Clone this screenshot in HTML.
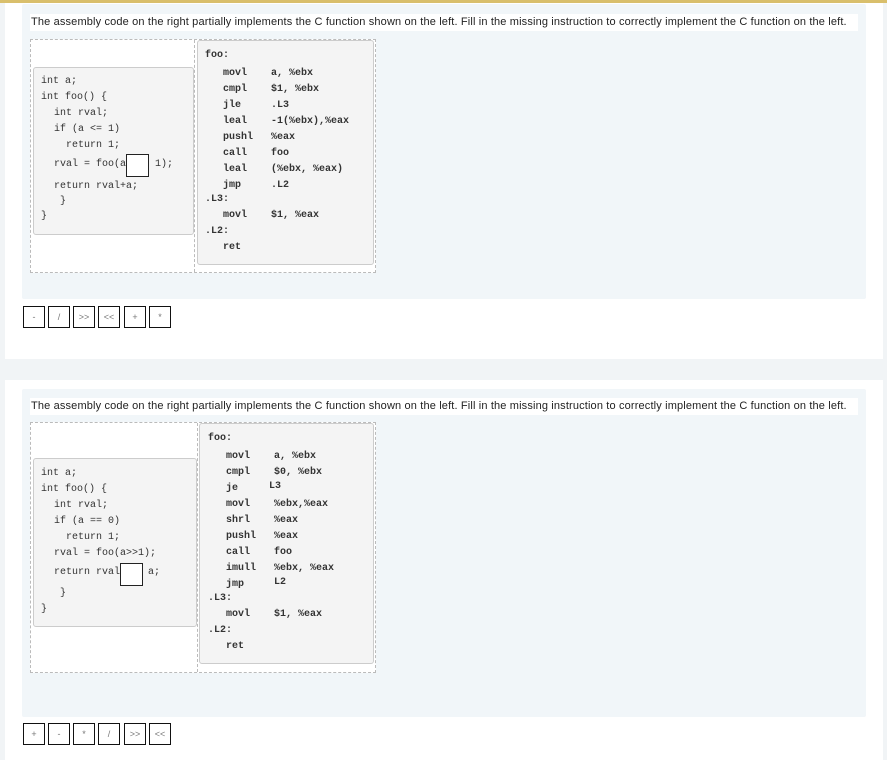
<!DOCTYPE html>
<html><head><style>
*{margin:0;padding:0;box-sizing:border-box}
body{width:887px;height:755px;background:#f1f4f6;position:relative;overflow:hidden;font-family:"Liberation Sans",sans-serif}
.a{position:absolute}
.card{position:absolute;background:#fff}
.panel{position:absolute;background:#f1f6f9;border-radius:2px}
.q{position:absolute;background:#fff;font-size:11px;color:#222;line-height:17px;padding-left:1px;white-space:nowrap;letter-spacing:0.15px}
.dash{position:absolute;border:1px dashed #bbb}
.box{position:absolute;background:#f4f4f4;border:1px solid #ccc;border-radius:3px}
.m{position:absolute;font-family:"Liberation Mono","DejaVu Sans Mono",monospace;font-size:10px;color:#333;white-space:pre;line-height:12px}
.b{font-weight:bold;color:#333}
.inp{position:absolute;background:#fff;border:1px solid #222;width:23px;height:23px}
.btn{position:absolute;width:22px;height:22px;border:1px solid #111;background:#fff;font-size:9px;color:#777;text-align:center;line-height:20px;font-family:"Liberation Sans",sans-serif}
</style></head><body>
<div class="a" style="left:0;top:0;width:887px;height:3px;background:#d9bf6c"></div>

<div class="card" style="left:5px;top:3px;width:878px;height:356px"></div>
<div class="panel" style="left:22px;top:4px;width:844px;height:295px"></div>
<div class="q" style="left:30px;top:14px;width:828px">The assembly code on the right partially implements the C function shown on the left. Fill in the missing instruction to correctly implement the C function on the left.</div>
<div class="dash" style="left:30px;top:39px;width:346px;height:234px;background:#fff"></div>
<div class="a" style="left:194px;top:40px;height:232px;border-left:1px dashed #bbb"></div>
<div class="box" style="left:33px;top:67px;width:161px;height:168px"></div>
<div class="box" style="left:197px;top:40px;width:177px;height:225px"></div>
<div class="m" style="left:41px;top:76px">int a;</div>
<div class="m" style="left:41px;top:92px">int foo() {</div>
<div class="m" style="left:54px;top:108px">int rval;</div>
<div class="m" style="left:54px;top:124px">if (a &lt;= 1)</div>
<div class="m" style="left:66px;top:140px">return 1;</div>
<div class="m" style="left:54px;top:159px">rval = foo(a</div>
<div class="inp" style="left:126px;top:154px"></div>
<div class="m" style="left:155px;top:159px">1);</div>
<div class="m" style="left:54px;top:181px">return rval+a;</div>
<div class="m" style="left:60px;top:196px">}</div>
<div class="m" style="left:41px;top:211px">}</div>
<div class="m b" style="left:205px;top:50px">foo:</div>
<div class="m b" style="left:223px;top:66px;line-height:16px">movl
cmpl
jle
leal
pushl
call
leal
jmp</div>
<div class="m b" style="left:271px;top:66px;line-height:16px">a, %ebx
$1, %ebx
.L3
-1(%ebx),%eax
%eax
foo
(%ebx, %eax)
.L2</div>
<div class="m b" style="left:205px;top:194px">.L3:</div>
<div class="m b" style="left:223px;top:210px">movl</div>
<div class="m b" style="left:271px;top:210px">$1, %eax</div>
<div class="m b" style="left:205px;top:226px">.L2:</div>
<div class="m b" style="left:223px;top:242px">ret</div>

<div class="btn" style="left:23px;top:306px">-</div>
<div class="btn" style="left:48px;top:306px">/</div>
<div class="btn" style="left:73px;top:306px">&gt;&gt;</div>
<div class="btn" style="left:98px;top:306px">&lt;&lt;</div>
<div class="btn" style="left:124px;top:306px">+</div>
<div class="btn" style="left:149px;top:306px">*</div>

<div class="card" style="left:5px;top:380px;width:878px;height:380px"></div>
<div class="panel" style="left:22px;top:389px;width:844px;height:328px"></div>
<div class="q" style="left:30px;top:398px;width:828px">The assembly code on the right partially implements the C function shown on the left. Fill in the missing instruction to correctly implement the C function on the left.</div>
<div class="dash" style="left:30px;top:422px;width:346px;height:251px;background:#fff"></div>
<div class="a" style="left:197px;top:423px;height:249px;border-left:1px dashed #bbb"></div>
<div class="box" style="left:33px;top:458px;width:164px;height:169px"></div>
<div class="box" style="left:199px;top:423px;width:175px;height:241px"></div>
<div class="m" style="left:41px;top:468px">int a;</div>
<div class="m" style="left:41px;top:484px">int foo() {</div>
<div class="m" style="left:54px;top:500px">int rval;</div>
<div class="m" style="left:54px;top:516px">if (a == 0)</div>
<div class="m" style="left:66px;top:532px">return 1;</div>
<div class="m" style="left:54px;top:548px">rval = foo(a&gt;&gt;1);</div>
<div class="m" style="left:54px;top:567px">return rval</div>
<div class="inp" style="left:120px;top:563px"></div>
<div class="m" style="left:148px;top:567px">a;</div>
<div class="m" style="left:60px;top:588px">}</div>
<div class="m" style="left:41px;top:604px">}</div>
<div class="m b" style="left:208px;top:433px">foo:</div>
<div class="m b" style="left:226px;top:449px;line-height:16px">movl
cmpl
je
movl
shrl
pushl
call
imull
jmp</div>
<div class="m b" style="left:274px;top:449px;line-height:16px">a, %ebx
$0, %ebx</div>
<div class="m b" style="left:269px;top:481px">L3</div>
<div class="m b" style="left:274px;top:497px;line-height:16px">%ebx,%eax
%eax
%eax
foo
%ebx, %eax</div>
<div class="m b" style="left:274px;top:577px">L2</div>
<div class="m b" style="left:208px;top:593px">.L3:</div>
<div class="m b" style="left:226px;top:609px">movl</div>
<div class="m b" style="left:274px;top:609px">$1, %eax</div>
<div class="m b" style="left:208px;top:625px">.L2:</div>
<div class="m b" style="left:226px;top:641px">ret</div>

<div class="btn" style="left:23px;top:723px">+</div>
<div class="btn" style="left:48px;top:723px">-</div>
<div class="btn" style="left:73px;top:723px">*</div>
<div class="btn" style="left:98px;top:723px">/</div>
<div class="btn" style="left:124px;top:723px">&gt;&gt;</div>
<div class="btn" style="left:149px;top:723px">&lt;&lt;</div>
</body></html>
